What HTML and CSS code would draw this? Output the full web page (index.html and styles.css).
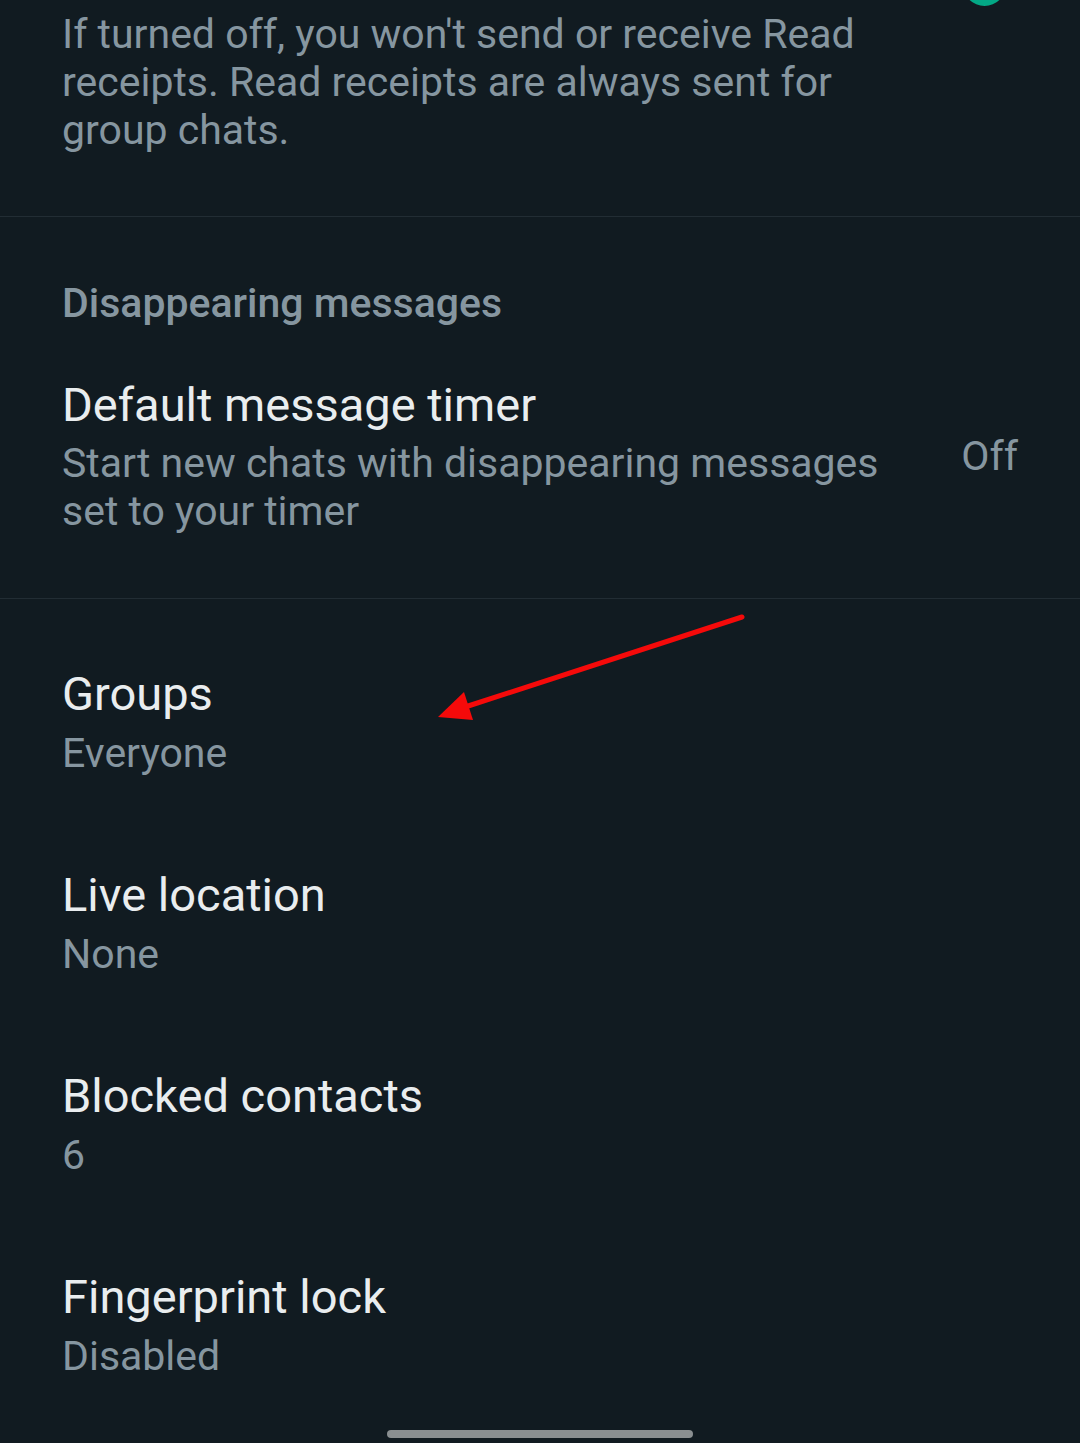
FILE: index.html
```html
<!DOCTYPE html>
<html lang="en">
<head>
    <meta charset="UTF-8">
    <meta name="viewport" content="width=device-width, initial-scale=1.0">
    <title>Privacy</title>
    <link rel="stylesheet" href="styles.css">
</head>
<body>
    <!-- Toggle knob from the row above, cut by the top edge -->
    <div class="knob"></div>

    <div class="note">
        If turned off, you won't send or receive Read receipts. Read receipts are always sent for group chats.
    </div>

    <div class="section">
        <div class="section-title">Disappearing messages</div>
        <div class="row row-value">
            <div class="row-text">
                <div class="row-title">Default message timer</div>
                <div class="row-sub">Start new chats with disappearing messages set to your timer</div>
            </div>
            <div class="row-side">Off</div>
        </div>
    </div>

    <div class="list">
        <div class="row">
            <div class="row-text">
                <div class="row-title">Groups</div>
                <div class="row-sub">Everyone</div>
            </div>
        </div>
        <div class="row">
            <div class="row-text">
                <div class="row-title">Live location</div>
                <div class="row-sub">None</div>
            </div>
        </div>
        <div class="row">
            <div class="row-text">
                <div class="row-title">Blocked contacts</div>
                <div class="row-sub">6</div>
            </div>
        </div>
        <div class="row">
            <div class="row-text">
                <div class="row-title">Fingerprint lock</div>
                <div class="row-sub">Disabled</div>
            </div>
        </div>
    </div>

    <!-- Red arrow pointing at Groups -->
    <svg class="arrow" width="1080" height="1443" viewBox="0 0 1080 1443">
        <line x1="742" y1="617" x2="462" y2="708" stroke="#f50a0a" stroke-width="5" stroke-linecap="round"/>
        <polygon points="438,717 464,692 473,720" fill="#f50a0a"/>
    </svg>

    <div class="home-bar"></div>
</body>
</html>
```

FILE: styles.css
```css
* {
    margin: 0;
    padding: 0;
    box-sizing: border-box;
}

body {
    font-family: Roboto, "Liberation Sans", sans-serif;
    background-color: #111b21;
    color: #e9edef;
    width: 1080px;
    height: 1443px;
    overflow: hidden;
    position: relative;
}

.knob {
    position: absolute;
    top: -37px;
    left: 963px;
    width: 43px;
    height: 43px;
    border-radius: 50%;
    background-color: #03a885;
}

.note {
    padding: 10px 190px 62px 62px;
    font-size: 41px;
    line-height: 48px;
    color: #8696a0;
    border-bottom: 1px solid #222d34;
}

.section {
    padding-top: 62px;
    border-bottom: 1px solid #222d34;
}

.section-title {
    padding: 0 62px;
    font-size: 41px;
    line-height: 48px;
    font-weight: 500;
    color: #8696a0;
}

.row {
    display: flex;
    align-items: center;
    padding: 44px 62px 46px 62px;
}

.row-value {
    padding-top: 50px;
    padding-bottom: 63px;
}

.row-text {
    flex: 1;
    display: flex;
    flex-direction: column;
    gap: 7px;
}

.row-value .row-text {
    gap: 6px;
    padding-right: 60px;
}

.row-title {
    font-size: 47px;
    line-height: 56px;
    color: #e9edef;
}

.row-sub {
    font-size: 41px;
    line-height: 48px;
    color: #8696a0;
}

.row-side {
    font-size: 41px;
    line-height: 48px;
    color: #8696a0;
}

.list {
    padding-top: 23px;
}

.arrow {
    position: absolute;
    top: 0;
    left: 0;
    pointer-events: none;
}

.home-bar {
    position: absolute;
    left: 387px;
    top: 1430px;
    width: 306px;
    height: 8px;
    border-radius: 4px;
    background-color: #8a8f91;
}
```
